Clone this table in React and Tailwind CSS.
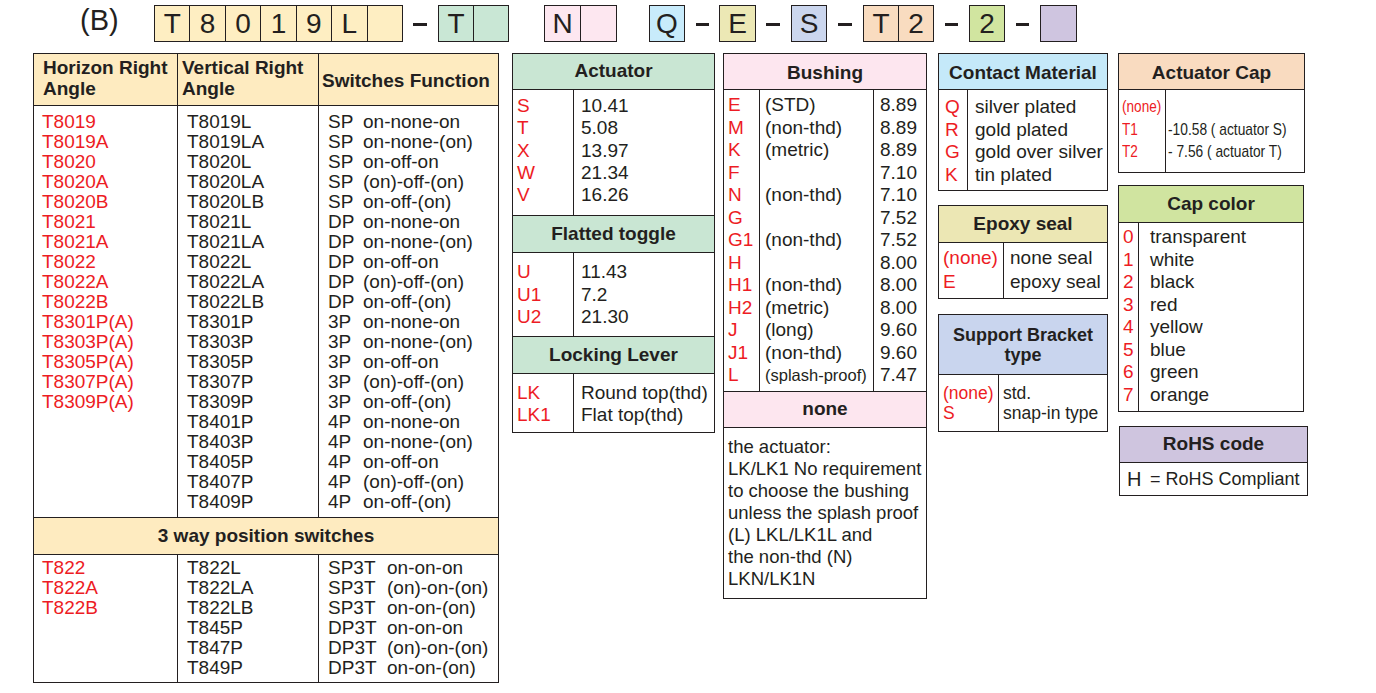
import React from "react";

const col1 = ["T8019","T8019A","T8020","T8020A","T8020B","T8021","T8021A","T8022","T8022A","T8022B","T8301P(A)","T8303P(A)","T8305P(A)","T8307P(A)","T8309P(A)"];
const col2 = ["T8019L","T8019LA","T8020L","T8020LA","T8020LB","T8021L","T8021LA","T8022L","T8022LA","T8022LB","T8301P","T8303P","T8305P","T8307P","T8309P","T8401P","T8403P","T8405P","T8407P","T8409P"];
const funcs = ["on-none-on","on-none-(on)","on-off-on","(on)-off-(on)","on-off-(on)"];
const poles = ["SP","DP","3P","4P"];
const col3 = poles.flatMap((p) => funcs.map((f) => [p, f]));
const b1 = ["T822","T822A","T822B"];
const b2 = ["T822L","T822LA","T822LB","T845P","T847P","T849P"];
const b3 = [["SP3T","on-on-on"],["SP3T","(on)-on-(on)"],["SP3T","on-on-(on)"],["DP3T","on-on-on"],["DP3T","(on)-on-(on)"],["DP3T","on-on-(on)"]];
const bushing = [["E","(STD)","8.89"],["M","(non-thd)","8.89"],["K","(metric)","8.89"],["F","","7.10"],["N","(non-thd)","7.10"],["G","","7.52"],["G1","(non-thd)","7.52"],["H","","8.00"],["H1","(non-thd)","8.00"],["H2","(metric)","8.00"],["J","(long)","9.60"],["J1","(non-thd)","9.60"],["L","(splash-proof)","7.47"]];
const colors = ["transparent","white","black","red","yellow","blue","green","orange"];

function Boxes({ cls, cells }) {
  return (
    <div className={"flex h-[37px] border border-[#231f20] " + cls}>
      {cells.map((c, i) => (
        <div
          key={i}
          className={
            "flex-1 flex items-center justify-center text-[28px] leading-none" +
            (i ? " border-l border-[#231f20]" : "")
          }
        >
          {c}
        </div>
      ))}
    </div>
  );
}

function Dash({ cls }) {
  return <div className={"mt-[18px] h-[3px] bg-[#231f20] " + cls} />;
}

function TopRow() {
  return (
    <div className="flex items-start pt-[5px] h-[42px]">
      <div className="ml-[80px] w-[38px] h-[37px] flex items-center pb-[7px] text-[29px] leading-none whitespace-nowrap">(B)</div>
      <Boxes cls="ml-[36px] w-[249px] bg-[#feeec2]" cells={["T", "8", "0", "1", "9", "L", ""]} />
      <Dash cls="ml-[10px] w-[14px]" />
      <Boxes cls="ml-[11px] w-[71px] bg-[#c9e7d5]" cells={["T", ""]} />
      <Boxes cls="ml-[35px] w-[73px] bg-[#fde7f0]" cells={["N", ""]} />
      <Boxes cls="ml-[32px] w-[36px] bg-[#c8ebfb]" cells={["Q"]} />
      <Dash cls="ml-[11px] w-[13px]" />
      <Boxes cls="ml-[10px] w-[37px] bg-[#ece8b5]" cells={["E"]} />
      <Dash cls="ml-[10px] w-[14px]" />
      <Boxes cls="ml-[11px] w-[36px] bg-[#cbd6ee]" cells={["S"]} />
      <Dash cls="ml-[11px] w-[14px]" />
      <Boxes cls="ml-[11px] w-[71px] bg-[#f9dcc0]" cells={["T", "2"]} />
      <Dash cls="ml-[11px] w-[13px]" />
      <Boxes cls="ml-[11px] w-[36px] bg-[#d1e5a0]" cells={["2"]} />
      <Dash cls="ml-[11px] w-[13px]" />
      <Boxes cls="ml-[11px] w-[37px] bg-[#cfc5e0]" cells={[""]} />
    </div>
  );
}

function LeftTable() {
  return (
    <div className="w-[466px] shrink-0 border border-[#231f20] text-[19px]">
      <div className="flex h-[52px] border-b border-[#231f20] bg-[#feebc0] font-bold text-[19px] leading-[21px]">
        <div className="w-[144px] shrink-0 border-r border-[#231f20] pl-[9px] pt-[3px] whitespace-nowrap">Horizon Right<br />Angle</div>
        <div className="w-[141px] shrink-0 border-r border-[#231f20] pl-[4px] pt-[3px] whitespace-nowrap">Vertical Right<br />Angle</div>
        <div className="flex-1 pl-[3px] pt-[16px] whitespace-nowrap">Switches Function</div>
      </div>
      <div className="flex h-[412px] border-b border-[#231f20] leading-[20px]">
        <div className="w-[144px] shrink-0 border-r border-[#231f20] pl-[8px] pt-[6px] text-[#ed1c24]">
          {col1.map((t) => <div key={t}>{t}</div>)}
        </div>
        <div className="w-[141px] shrink-0 border-r border-[#231f20] pl-[9px] pt-[6px]">
          {col2.map((t) => <div key={t}>{t}</div>)}
        </div>
        <div className="flex-1 pl-[9px] pt-[6px]">
          {col3.map(([p, f], i) => (
            <div key={i} className="flex whitespace-nowrap">
              <span className="w-[35px] shrink-0">{p}</span>
              <span>{f}</span>
            </div>
          ))}
        </div>
      </div>
      <div className="h-[37px] border-b border-[#231f20] bg-[#feebc0] flex items-center justify-center font-bold text-[19px]">3 way position switches</div>
      <div className="flex h-[127px] leading-[20px]">
        <div className="w-[144px] shrink-0 border-r border-[#231f20] pl-[8px] pt-[3px] text-[#ed1c24]">
          {b1.map((t) => <div key={t}>{t}</div>)}
        </div>
        <div className="w-[141px] shrink-0 border-r border-[#231f20] pl-[9px] pt-[3px]">
          {b2.map((t) => <div key={t}>{t}</div>)}
        </div>
        <div className="flex-1 pl-[9px] pt-[3px]">
          {b3.map(([p, f], i) => (
            <div key={i} className="flex whitespace-nowrap">
              <span className="w-[59px] shrink-0">{p}</span>
              <span>{f}</span>
            </div>
          ))}
        </div>
      </div>
    </div>
  );
}

function ActuatorTable() {
  return (
    <div className="ml-[13px] w-[203px] shrink-0 border border-[#231f20] text-[19px]">
      <div className="h-[36px] border-b border-[#231f20] bg-[#c9e6d3] flex items-center justify-center font-bold">Actuator</div>
      <div className="flex h-[126px] border-b border-[#231f20] leading-[22.25px]">
        <div className="w-[61px] shrink-0 border-r border-[#231f20] pl-[4px] pt-[5px] text-[#ed1c24]">
          {["S", "T", "X", "W", "V"].map((t) => <div key={t}>{t}</div>)}
        </div>
        <div className="flex-1 pl-[7px] pt-[5px]">
          {["10.41", "5.08", "13.97", "21.34", "16.26"].map((t) => <div key={t}>{t}</div>)}
        </div>
      </div>
      <div className="h-[37px] border-b border-[#231f20] bg-[#c9e6d3] flex items-center justify-center font-bold">Flatted toggle</div>
      <div className="flex h-[84px] border-b border-[#231f20] leading-[22.5px]">
        <div className="w-[61px] shrink-0 border-r border-[#231f20] pl-[4px] pt-[8px] text-[#ed1c24]">
          {["U", "U1", "U2"].map((t) => <div key={t}>{t}</div>)}
        </div>
        <div className="flex-1 pl-[7px] pt-[8px]">
          {["11.43", "7.2", "21.30"].map((t) => <div key={t}>{t}</div>)}
        </div>
      </div>
      <div className="h-[37px] border-b border-[#231f20] bg-[#c9e6d3] flex items-center justify-center font-bold">Locking Lever</div>
      <div className="flex h-[58px] leading-[22px]">
        <div className="w-[61px] shrink-0 border-r border-[#231f20] pl-[4px] pt-[8px] text-[#ed1c24]">
          {["LK", "LK1"].map((t) => <div key={t}>{t}</div>)}
        </div>
        <div className="flex-1 pl-[7px] pt-[8px] whitespace-nowrap">
          {["Round top(thd)", "Flat top(thd)"].map((t) => <div key={t}>{t}</div>)}
        </div>
      </div>
    </div>
  );
}

function BushingTable() {
  return (
    <div className="ml-[8px] w-[204px] shrink-0 border border-[#231f20] text-[19px]">
      <div className="h-[36px] border-b border-[#231f20] bg-[#fde6ef] flex items-center justify-center pt-[4px] font-bold">Bushing</div>
      <div className="flex h-[302px] border-b border-[#231f20] leading-[22.5px]">
        <div className="w-[36px] shrink-0 border-r border-[#231f20] pl-[4px] pt-[4px] text-[#ed1c24]">
          {bushing.map(([a]) => <div key={a}>{a}</div>)}
        </div>
        <div className="w-[114px] shrink-0 border-r border-[#231f20] pl-[5px] pt-[4px] whitespace-nowrap">
          {bushing.map(([a, b]) => (
            <div key={a} className="h-[22.5px]">
              {b === "(splash-proof)" ? <span className="text-[16.5px]">{b}</span> : b}
            </div>
          ))}
        </div>
        <div className="flex-1 pl-[6px] pt-[4px]">
          {bushing.map(([a, b, c]) => <div key={a}>{c}</div>)}
        </div>
      </div>
      <div className="h-[36px] border-b border-[#231f20] bg-[#fde6ef] flex items-center justify-center font-bold">none</div>
      <div className="h-[170px] pl-[4px] pt-[8px] text-[18.5px] leading-[22px] whitespace-nowrap">
        {["the actuator:", "LK/LK1 No requirement", "to choose the bushing", "unless the splash proof", "(L) LKL/LK1L and", "the non-thd (N)", "LKN/LK1N"].map((t) => <div key={t}>{t}</div>)}
      </div>
    </div>
  );
}

function Column4() {
  return (
    <div className="ml-[11px] w-[170px] shrink-0 flex flex-col">
      <div className="border border-[#231f20] text-[19px]">
        <div className="h-[36px] border-b border-[#231f20] bg-[#c5e9f9] flex items-center justify-center pt-[4px] font-bold whitespace-nowrap">Contact Material</div>
        <div className="flex h-[100px] leading-[22.5px]">
          <div className="w-[29px] shrink-0 border-r border-[#231f20] pl-[6px] pt-[6px] text-[#ed1c24]">
            {["Q", "R", "G", "K"].map((t) => <div key={t}>{t}</div>)}
          </div>
          <div className="flex-1 pl-[7px] pt-[6px] whitespace-nowrap">
            {["silver plated", "gold plated", "gold over silver", "tin plated"].map((t) => <div key={t}>{t}</div>)}
          </div>
        </div>
      </div>
      <div className="mt-[14px] border border-[#231f20] text-[19px]">
        <div className="h-[37px] border-b border-[#231f20] bg-[#ece7b4] flex items-center justify-center font-bold">Epoxy seal</div>
        <div className="flex h-[55px] leading-[24px]">
          <div className="w-[65px] shrink-0 border-r border-[#231f20] pl-[4px] pt-[3px] text-[#ed1c24]">
            {["(none)", "E"].map((t) => <div key={t}>{t}</div>)}
          </div>
          <div className="flex-1 pl-[6px] pt-[3px] whitespace-nowrap">
            {["none seal", "epoxy seal"].map((t) => <div key={t}>{t}</div>)}
          </div>
        </div>
      </div>
      <div className="mt-[15px] border border-[#231f20] text-[17.5px]">
        <div className="h-[60px] border-b border-[#231f20] bg-[#c9d5ee] flex items-center justify-center text-center font-bold text-[18px] leading-[20px]">Support Bracket<br />type</div>
        <div className="flex h-[56px] leading-[20px]">
          <div className="w-[60px] shrink-0 border-r border-[#231f20] pl-[4px] pt-[8px] text-[#ed1c24]">
            {["(none)", "S"].map((t) => <div key={t}>{t}</div>)}
          </div>
          <div className="flex-1 pl-[4px] pt-[8px] whitespace-nowrap">
            {["std.", "snap-in type"].map((t) => <div key={t}>{t}</div>)}
          </div>
        </div>
      </div>
    </div>
  );
}

function Column5() {
  return (
    <div className="ml-[10px] w-[190px] shrink-0 flex flex-col items-start">
      <div className="w-[187px] border border-[#231f20] text-[17px]">
        <div className="h-[36px] border-b border-[#231f20] bg-[#f9dbc0] flex items-center justify-center pt-[4px] font-bold text-[19px]">Actuator Cap</div>
        <div className="flex h-[82px] leading-[22.5px]">
          <div className="w-[47px] shrink-0 border-r border-[#231f20] pl-[3px] pt-[6px] text-[#ed1c24] whitespace-nowrap">
            {["(none)", "T1", "T2"].map((t) => (
              <div key={t}><span className="inline-block origin-left scale-x-[0.8]">{t}</span></div>
            ))}
          </div>
          <div className="flex-1 pl-[2px] pt-[6px] whitespace-nowrap">
            <div className="h-[22.5px]" />
            {["-10.58 ( actuator S)", "- 7.56 ( actuator T)"].map((t) => (
              <div key={t}><span className="inline-block origin-left scale-x-[0.81]">{t}</span></div>
            ))}
          </div>
        </div>
      </div>
      <div className="mt-[12px] w-[186px] border border-[#231f20] text-[19px]">
        <div className="h-[37px] border-b border-[#231f20] bg-[#d0e4a0] flex items-center justify-center font-bold">Cap color</div>
        <div className="flex h-[188px] leading-[22.5px]">
          <div className="w-[20px] shrink-0 border-r border-[#231f20] pl-[4px] pt-[3px] text-[#ed1c24]">
            {colors.map((c, i) => <div key={c}>{i}</div>)}
          </div>
          <div className="flex-1 pl-[11px] pt-[3px]">
            {colors.map((c) => <div key={c}>{c}</div>)}
          </div>
        </div>
      </div>
      <div className="mt-[14px] ml-[1px] w-[189px] border border-[#231f20] text-[18px]">
        <div className="h-[36px] border-b border-[#231f20] bg-[#cfc5df] flex items-center justify-center font-bold text-[19px]">RoHS code</div>
        <div className="h-[32px] flex items-start pl-[7px] pt-[5px] leading-[22px] whitespace-nowrap">
          <span className="w-[23px] shrink-0 text-[20px]">H</span>
          <span>= RoHS Compliant</span>
        </div>
      </div>
    </div>
  );
}

export default function App() {
  return (
    <div className="w-[1376px] h-[693px] bg-white text-[#231f20] font-['Liberation_Sans',Arial,sans-serif] overflow-hidden">
      <TopRow />
      <div className="flex items-start pl-[33px] mt-[11px]">
        <LeftTable />
        <ActuatorTable />
        <BushingTable />
        <Column4 />
        <Column5 />
      </div>
    </div>
  );
}
